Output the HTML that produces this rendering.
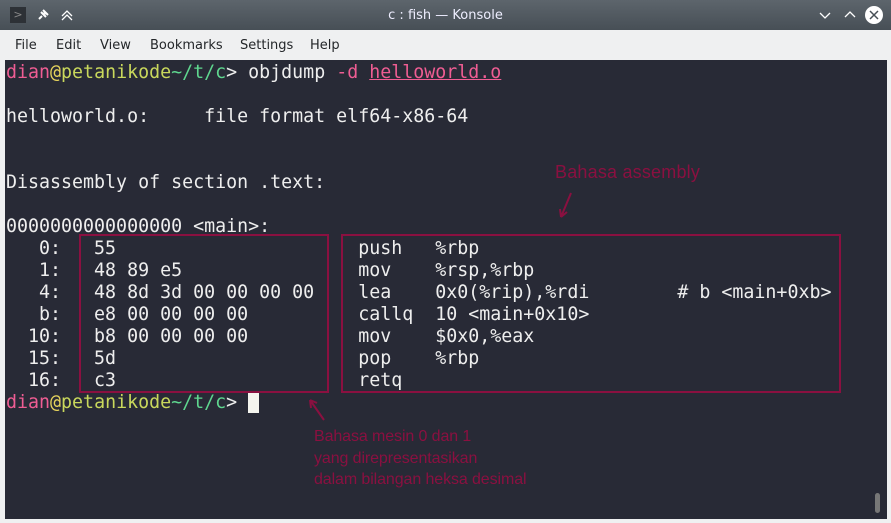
<!DOCTYPE html>
<html><head><meta charset="utf-8"><style>
body{margin:0;width:891px;height:523px;overflow:hidden;background:#eff0f1;font-family:"DejaVu Sans","Liberation Sans",sans-serif;position:relative}
.title{position:absolute;left:0;top:0;width:891px;height:30px;background:linear-gradient(#5d656c,#474f56);color:#eef;font-size:13px}
.menu{position:absolute;top:30px;left:0;width:891px;height:30px;font-size:13px;color:#232629}
.menu span{position:absolute;top:8px}
.term{position:absolute;left:5px;top:60px;width:882px;height:459px;background:#282a36}
pre{margin:0;position:absolute;left:1px;font-family:"DejaVu Sans Mono","Liberation Mono",monospace;font-size:18.3px;line-height:22px;color:#eeeeee;white-space:pre}
.p{color:#ef5d93}.y{color:#e6d35c}.g{color:#c9d85c}.c{color:#5fd78f}
.box{position:absolute;border:2px solid #8a1040;box-sizing:border-box}
.ann{position:absolute;color:#8a1040;font-family:"Liberation Sans",sans-serif;font-size:16px;line-height:21.5px;letter-spacing:-0.1px}
</style></head><body>
<div class="title">
<div style="position:absolute;left:10px;top:7px;width:16px;height:16px;background:#2d3136;color:#888;font-size:11px;line-height:16px;text-align:center">&gt;</div>
<svg style="position:absolute;left:36px;top:8px" width="14" height="14"><path d="M3 11L6 8M5 4L10 9M7 2L12 7M8 4L10 6" stroke="#fff" stroke-width="2" fill="none"/></svg>
<svg style="position:absolute;left:60px;top:8px" width="14" height="14"><path d="M2 8L7 3L12 8M2 12L7 7L12 12" stroke="#fff" stroke-width="1.3" fill="none"/></svg>
<div style="position:absolute;left:0;width:891px;top:8px;text-align:center">c : fish — Konsole</div>
<svg style="position:absolute;left:818px;top:9px" width="14" height="12"><path d="M2 4L7 9L12 4" stroke="#fff" stroke-width="1.3" fill="none"/></svg>
<svg style="position:absolute;left:843px;top:9px" width="14" height="12"><path d="M2 8L7 3L12 8" stroke="#fff" stroke-width="1.3" fill="none"/></svg>
<svg style="position:absolute;left:865px;top:6px" width="18" height="18"><circle cx="9" cy="9" r="9" fill="#fff"/><path d="M5 5L13 13M13 5L5 13" stroke="#474f56" stroke-width="1.5"/></svg>
</div>
<div class="menu"><span style="left:15px">File</span><span style="left:56px">Edit</span><span style="left:100px">View</span><span style="left:150px">Bookmarks</span><span style="left:240px">Settings</span><span style="left:310px">Help</span></div>
<div class="term">
<pre style="top:2px"><span class="p">dian</span><span class="y">@</span><span class="g">petanikode</span><span class="c">~/t/c</span>&gt; objdump <span class="p">-d</span> <span class="p" style="text-decoration:underline">helloworld.o</span>

helloworld.o:     file format elf64-x86-64


Disassembly of section .text:

0000000000000000 &lt;main&gt;:
   0:   55                      push   %rbp
   1:   48 89 e5                mov    %rsp,%rbp
   4:   48 8d 3d 00 00 00 00    lea    0x0(%rip),%rdi        # b &lt;main+0xb&gt;
   b:   e8 00 00 00 00          callq  10 &lt;main+0x10&gt;
  10:   b8 00 00 00 00          mov    $0x0,%eax
  15:   5d                      pop    %rbp
  16:   c3                      retq
<span class="p">dian</span><span class="y">@</span><span class="g">petanikode</span><span class="c">~/t/c</span>&gt; <span style="background:#f4f4ee">&#160;</span></pre>
<div style="position:absolute;left:870px;top:433px;width:5px;height:20px;border-radius:3px;background:#777"></div>
</div>
<div class="box" style="left:79px;top:234px;width:250px;height:159px"></div>
<div class="box" style="left:341px;top:234px;width:500px;height:159px"></div>
<div class="ann" style="left:555px;top:162px;font-size:18px;letter-spacing:0.2px">Bahasa assembly</div>
<svg style="position:absolute;left:0;top:0" width="891" height="523"><path d="M571 193L561 217M561 217L560 209M561 217L567 212" stroke="#8a1040" stroke-width="2" fill="none"/><path d="M324 420L310 400M310 400L311 408M310 400L317 403" stroke="#8a1040" stroke-width="2" fill="none"/></svg>
<div class="ann" style="left:314px;top:426px">Bahasa mesin 0 dan 1<br>yang direpresentasikan<br>dalam bilangan heksa desimal</div>
</body></html>
